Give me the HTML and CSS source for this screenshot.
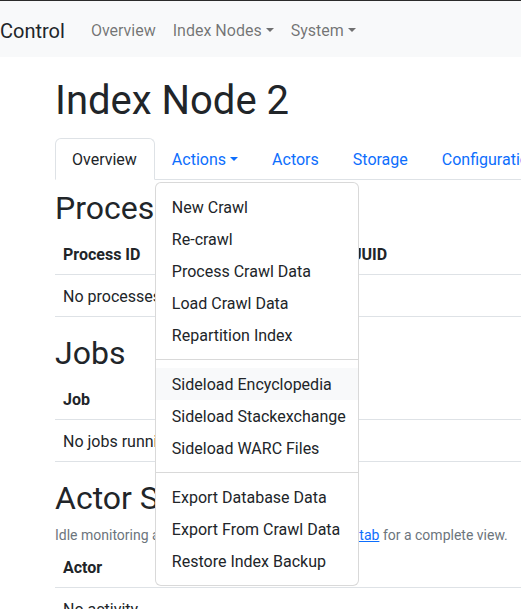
FILE: index.html
```html
<!DOCTYPE html>
<html lang="en">
<head>
<meta charset="utf-8">
<title>Index Node 2</title>
<link rel="stylesheet" href="styles.css">
</head>
<body>
<nav class="navbar">
  <a class="brand" href="#">Control</a>
  <ul class="nav-links">
    <li><a href="#">Overview</a></li>
    <li><a href="#" class="caret">Index Nodes</a></li>
    <li><a href="#" class="caret">System</a></li>
  </ul>
</nav>
<main class="container">
  <h1>Index Node 2</h1>
  <ul class="tabs">
    <li><a href="#" class="tab active">Overview</a></li>
    <li class="dropdown">
      <a href="#" class="tab caret">Actions</a>
      <ul class="menu">
        <li><a href="#">New Crawl</a></li>
        <li><a href="#">Re-crawl</a></li>
        <li><a href="#">Process Crawl Data</a></li>
        <li><a href="#">Load Crawl Data</a></li>
        <li><a href="#">Repartition Index</a></li>
        <li class="divider"></li>
        <li><a href="#" class="hover">Sideload Encyclopedia</a></li>
        <li><a href="#">Sideload Stackexchange</a></li>
        <li><a href="#">Sideload WARC Files</a></li>
        <li class="divider"></li>
        <li><a href="#">Export Database Data</a></li>
        <li><a href="#">Export From Crawl Data</a></li>
        <li><a href="#">Restore Index Backup</a></li>
      </ul>
    </li>
    <li><a href="#" class="tab">Actors</a></li>
    <li><a href="#" class="tab">Storage</a></li>
    <li><a href="#" class="tab">Configuration</a></li>
  </ul>

  <h2>Processes</h2>
  <table class="table">
    <thead><tr><th class="col1">Process ID</th><th>UUID</th></tr></thead>
    <tbody><tr><td colspan="2">No processes running</td></tr></tbody>
  </table>

  <h2>Jobs</h2>
  <table class="table">
    <thead><tr><th>Job</th></tr></thead>
    <tbody><tr><td>No jobs running</td></tr></tbody>
  </table>

  <h2>Actor Summary</h2>
  <p class="small">Idle monitoring actors are hidden, see the <a href="#">Actors tab</a> for a complete view.</p>
  <table class="table">
    <thead><tr><th>Actor</th></tr></thead>
    <tbody><tr><td>No activity</td></tr></tbody>
  </table>
</main>
</body>
</html>
```
FILE: styles.css
```css
html, body {
  margin: 0;
  padding: 0;
}
body {
  font-family: Roboto, "Noto Sans", "Liberation Sans", sans-serif;
  font-size: 16px;
  line-height: 1.5;
  color: #212529;
  background: #fff;
  border-top: 1px solid #2b2b2b;
  overflow: hidden;
  width: 521px;
  height: 608px;
}
a { color: #0d6efd; text-decoration: none; }
ul { list-style: none; margin: 0; padding: 0; }

.navbar {
  display: flex;
  align-items: center;
  background: #f8f9fa;
  height: 56px;
  box-sizing: border-box;
  padding: 4px 0 0;
}
.brand {
  color: #212529;
  font-size: 20px;
  line-height: 30px;
  margin-right: 18px;
  padding: 5px 0;
}
.nav-links {
  display: flex;
}
.nav-links a {
  display: block;
  color: rgba(0, 0, 0, 0.55);
  padding: 8px 8px;
}
.nav-links li + li { margin-left: 1px; }
.caret::after {
  content: "";
  display: inline-block;
  margin-left: 0.255em;
  vertical-align: 0.255em;
  border-top: 0.3em solid;
  border-right: 0.3em solid transparent;
  border-left: 0.3em solid transparent;
  border-bottom: 0;
}

.container {
  padding-left: 55px;
  width: 700px;
}
h1 {
  font-size: 40px;
  font-weight: 400;
  line-height: 48px;
  margin: 20px 0 13px;
}
h2 {
  font-size: 32px;
  font-weight: 400;
  line-height: 38px;
  margin: 0 0 8px;
}
.tabs {
  display: flex;
  border-bottom: 1px solid #dee2e6;
  margin-bottom: 9px;
}
.tabs > li { position: relative; }
.tab {
  display: block;
  padding: 9px 16px 7px;
  border: 1px solid transparent;
  border-top-left-radius: 6px;
  border-top-right-radius: 6px;
  margin-bottom: -1px;
}
.tab.active {
  color: #212529;
  background: #fff;
  border-color: #dee2e6 #dee2e6 #fff;
  padding-right: 17px;
}
.menu {
  position: absolute;
  top: 44px;
  left: 0;
  z-index: 10;
  width: 204px;
  box-sizing: border-box;
  padding: 8px 0;
  background: #fff;
  border: 1px solid rgba(0, 0, 0, 0.15);
  border-radius: 6px;
}
.menu a {
  display: block;
  padding: 5px 16px 3px;
  color: #212529;
  white-space: nowrap;
}
.menu a.hover { background: #f8f9fa; }
.divider {
  height: 0;
  margin: 8px 0;
  border-top: 1px solid rgba(0, 0, 0, 0.15);
}

.table {
  width: 100%;
  border-collapse: collapse;
  margin-bottom: 17px;
}
.table th, .table td {
  text-align: left;
  border-bottom: 1px solid #dee2e6;
}
.table th {
  font-weight: 700;
  padding: 8px 8px 7px;
}
.table td {
  padding: 10px 8px 7px;
}
.col1 { width: 272px; }
.small {
  font-size: 14px;
  line-height: 21px;
  color: #6c757d;
  margin: 0 0 2px;
}
.small a { text-decoration: underline; }
```
